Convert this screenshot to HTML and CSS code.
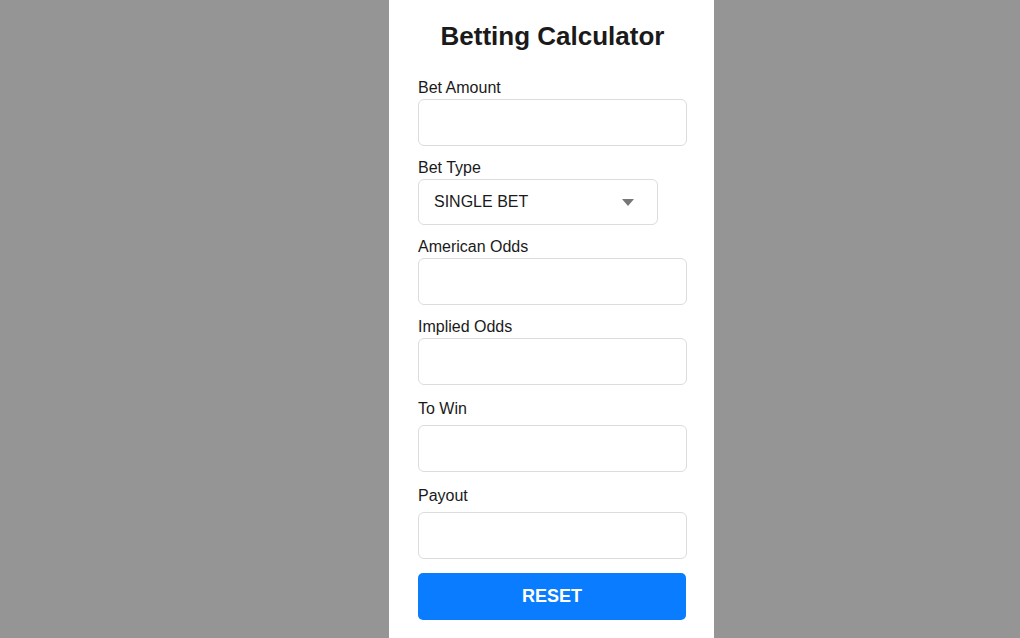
FILE: index.html
```html
<!DOCTYPE html>
<html lang="en">
<head>
    <meta charset="UTF-8">
    <meta name="viewport" content="width=device-width, initial-scale=1.0">
    <title>Betting Calculator</title>
    <link rel="stylesheet" href="styles.css">
</head>
<body>
    <div class="panel">
        <h1>Betting Calculator</h1>

        <div class="field">
            <label for="amount">Bet Amount</label>
            <input type="text" id="amount">
        </div>

        <div class="field">
            <label for="type">Bet Type</label>
            <div class="select-box">
                <span>SINGLE BET</span>
                <svg class="caret" width="12" height="7" viewBox="0 0 12 7"><path d="M0 0h12L6 7z" fill="#777"/></svg>
            </div>
        </div>

        <div class="field">
            <label for="american">American Odds</label>
            <input type="text" id="american">
        </div>

        <div class="field field-last">
            <label for="implied">Implied Odds</label>
            <input type="text" id="implied">
        </div>

        <div class="field field-result">
            <label for="towin">To Win</label>
            <input type="text" id="towin">
        </div>

        <div class="field field-result">
            <label for="payout">Payout</label>
            <input type="text" id="payout">
        </div>

        <button class="reset">RESET</button>
    </div>
</body>
</html>
```

FILE: styles.css
```css
body {
    margin: 0;
    background-color: #959595;
    font-family: 'Liberation Sans', Arial, sans-serif;
    color: #1a1a1a;
}

.panel {
    width: 325px;
    height: 638px;
    margin-left: 389px;
    padding: 20px 27px 0 29px;
    box-sizing: border-box;
    background-color: white;
}

h1 {
    margin: 0 0 26px;
    font-size: 26px;
    line-height: 32px;
    text-align: center;
    color: #1a1a1a;
}

.field {
    margin-bottom: 12px;
}

.field label {
    display: block;
    font-size: 16px;
    line-height: 20px;
    margin-bottom: 1px;
}

.field-last {
    margin-bottom: 14px;
}

.field-result {
    margin-bottom: 14px;
}

.field-result label {
    margin-bottom: 6px;
}

input {
    display: block;
    width: 100%;
    height: 47px;
    box-sizing: border-box;
    border: 1px solid #dcdcdc;
    border-radius: 6px;
    background: white;
    font-size: 16px;
    padding: 0 14px;
}

.select-box {
    display: flex;
    align-items: center;
    justify-content: space-between;
    width: 240px;
    height: 46px;
    box-sizing: border-box;
    padding: 0 23px 0 15px;
    border: 1px solid #dcdcdc;
    border-radius: 6px;
    font-size: 16px;
}

.reset {
    display: block;
    width: 268px;
    height: 47px;
    margin-top: 14px;
    border: none;
    border-radius: 5px;
    background-color: #0a7cff;
    color: white;
    font-family: inherit;
    font-size: 18px;
    font-weight: bold;
}
```
